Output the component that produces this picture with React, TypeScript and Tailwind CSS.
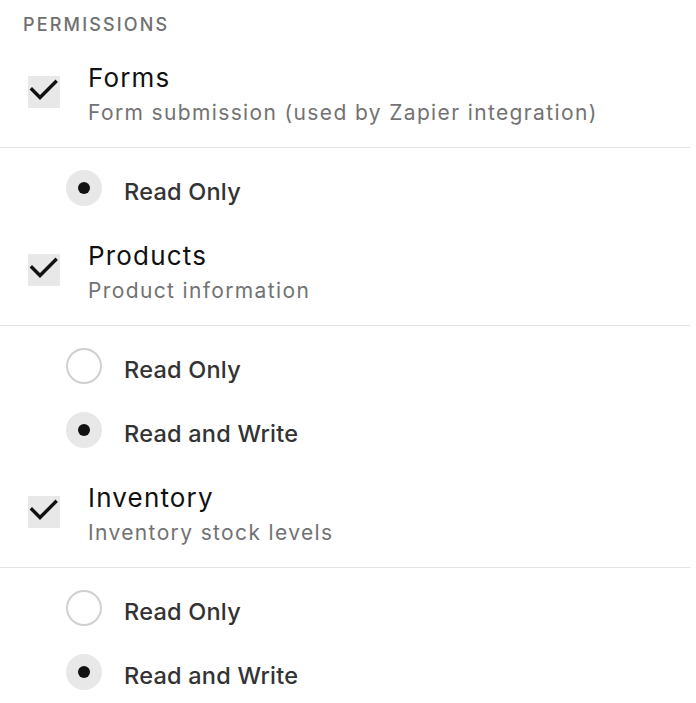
import React from "react";

type Opt = { label: string; selected: boolean };
type Perm = { title: string; desc: string; options: Opt[] };

const perms: Perm[] = [
  {
    title: "Forms",
    desc: "Form submission (used by Zapier integration)",
    options: [{ label: "Read Only", selected: true }],
  },
  {
    title: "Products",
    desc: "Product information",
    options: [
      { label: "Read Only", selected: false },
      { label: "Read and Write", selected: true },
    ],
  },
  {
    title: "Inventory",
    desc: "Inventory stock levels",
    options: [
      { label: "Read Only", selected: false },
      { label: "Read and Write", selected: true },
    ],
  },
];

function Check() {
  return (
    <div className="w-8 h-8 mt-[16px] bg-[#e8e8e8] flex items-center justify-center shrink-0">
      <svg width="32" height="32" viewBox="0 0 32 32" fill="none">
        <path d="M4 13.5 L12 21.5 L27.5 6" stroke="#111" strokeWidth="3.4" strokeLinecap="square" />
      </svg>
    </div>
  );
}

function Radio({ selected }: { selected: boolean }) {
  return selected ? (
    <div className="w-9 h-9 rounded-full bg-[#e8e8e8] flex items-center justify-center shrink-0">
      <div className="w-3 h-3 rounded-full bg-[#111]" />
    </div>
  ) : (
    <div className="w-9 h-9 rounded-full border-2 border-[#d0d0d0] bg-white shrink-0" />
  );
}

export default function App() {
  return (
    <div className="w-[696px] h-[703px] bg-white overflow-hidden font-['Inter',sans-serif]">
      <div className="pl-[23px] pt-[14px] text-[18px] leading-[22px] tracking-[0.12em] font-medium text-[#707070]">
        PERMISSIONS
      </div>
      <div className="w-[690px] pt-[24px]">
        {perms.map((p, i) => (
          <div key={i}>
            <div className="flex items-start gap-[28px] pl-[28px] pb-[16px] border-b border-[#e3e3e3]">
              <Check />
              <div className="flex flex-col">
                <div className="text-[26px] leading-[35px] tracking-[0.045em] text-[#111]">{p.title}</div>
                <div className="text-[21px] leading-[36px] tracking-[0.065em] text-[#727272]">{p.desc}</div>
              </div>
            </div>
            <div className="flex flex-col gap-[28px] pl-[66px] pt-[22px] pb-[32px]">
              {p.options.map((o, j) => (
                <div key={j} className="flex items-start h-9 gap-[22px]">
                  <Radio selected={o.selected} />
                  <div className="pt-[8px] text-[23.5px] leading-[28px] tracking-[0.01em] font-medium text-[#333]">{o.label}</div>
                </div>
              ))}
            </div>
          </div>
        ))}
      </div>
    </div>
  );
}
